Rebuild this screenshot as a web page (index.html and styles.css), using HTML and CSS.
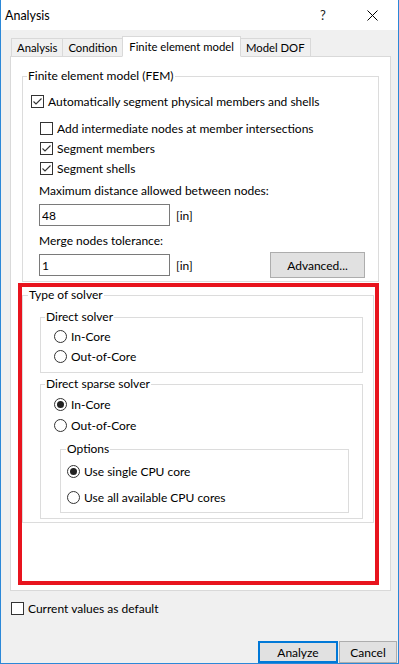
FILE: index.html
```html
<!DOCTYPE html>
<html>
<head>
<meta charset="utf-8">
<link rel="stylesheet" href="styles.css">
</head>
<body>
<div class="window">
  <div class="titlebar">
    <span class="title">Analysis</span>
    <span class="caption-btn help">?</span>
    <span class="caption-btn close">
      <svg width="11" height="11" viewBox="0 0 11 11"><path d="M0.5 0.5 L10.5 10.5 M10.5 0.5 L0.5 10.5" stroke="#000" stroke-width="1" fill="none"/></svg>
    </span>
  </div>
  <div class="content">
    <div class="tabs">
      <div class="tab">Analysis</div>
      <div class="tab">Condition</div>
      <div class="tab active">Finite element model</div>
      <div class="tab">Model DOF</div>
    </div>
    <div class="panel">
      <fieldset class="group fem">
        <legend>Finite element model (FEM)</legend>
        <div class="check auto">
          <span class="box"><svg width="11" height="11" viewBox="0 0 11 11"><path d="M1.5 5.5 L4 8 L9.5 2.5" stroke="#333" stroke-width="1.1" fill="none"/></svg></span>
          <span>Automatically segment physical members and shells</span>
        </div>
        <div class="check indent">
          <span class="box"></span>
          <span>Add intermediate nodes at member intersections</span>
        </div>
        <div class="check indent">
          <span class="box"><svg width="11" height="11" viewBox="0 0 11 11"><path d="M1.5 5.5 L4 8 L9.5 2.5" stroke="#333" stroke-width="1.1" fill="none"/></svg></span>
          <span>Segment members</span>
        </div>
        <div class="check indent">
          <span class="box"><svg width="11" height="11" viewBox="0 0 11 11"><path d="M1.5 5.5 L4 8 L9.5 2.5" stroke="#333" stroke-width="1.1" fill="none"/></svg></span>
          <span>Segment shells</span>
        </div>
        <div class="field-label first">Maximum distance allowed between nodes:</div>
        <div class="field-row">
          <input class="field" type="text" value="48">
          <span class="unit">[in]</span>
        </div>
        <div class="field-label second">Merge nodes tolerance:</div>
        <div class="field-row last">
          <input class="field" type="text" value="1">
          <span class="unit">[in]</span>
          <button class="btn advanced">Advanced...</button>
        </div>
      </fieldset>

      <div class="highlight">
        <fieldset class="group solver">
          <legend>Type of solver</legend>
          <fieldset class="group direct">
            <legend>Direct solver</legend>
            <div class="radio"><span class="circle"></span><span>In-Core</span></div>
            <div class="radio"><span class="circle"></span><span>Out-of-Core</span></div>
          </fieldset>
          <fieldset class="group sparse">
            <legend>Direct sparse solver</legend>
            <div class="radio"><span class="circle on"></span><span>In-Core</span></div>
            <div class="radio gap1"><span class="circle"></span><span>Out-of-Core</span></div>
            <fieldset class="group options">
              <legend>Options</legend>
              <div class="radio"><span class="circle on"></span><span>Use single CPU core</span></div>
              <div class="radio gap6"><span class="circle"></span><span>Use all available CPU cores</span></div>
            </fieldset>
          </fieldset>
        </fieldset>
      </div>
    </div>

    <div class="check default">
      <span class="box"></span>
      <span>Current values as default</span>
    </div>

    <div class="buttons">
      <button class="btn primary">Analyze</button>
      <button class="btn cancel">Cancel</button>
    </div>
  </div>
</div>
</body>
</html>
```

FILE: styles.css
```css
* { box-sizing: border-box; }

body {
  margin: 0;
  font-family: Lato, "Noto Sans", sans-serif;
  font-size: 12px;
  color: #000;
  background: #fff;
}

.window {
  width: 399px;
  height: 664px;
  border: 1px solid #2b88d8;
  border-top: none;
  background: #f0f0f0;
  display: flex;
  flex-direction: column;
}

.titlebar {
  height: 30px;
  flex: none;
  background: #fff;
  display: flex;
  align-items: center;
  padding-left: 4px;
}

.title {
  flex: 1;
  font-size: 12.5px;
}

.caption-btn {
  width: 46px;
  height: 30px;
  display: flex;
  align-items: center;
  justify-content: center;
  margin-right: 3px;
}

.help {
  font-size: 13px;
  color: #222;
}

.content {
  flex: 1;
  display: flex;
  flex-direction: column;
  padding: 6px 0 0 9px;
}

.tabs {
  display: flex;
  align-items: flex-end;
  height: 21px;
  margin-left: 1px;
  margin-bottom: -1px;
  position: relative;
  z-index: 1;
}

.tab {
  height: 19px;
  padding: 0 5px;
  border: 1px solid #d9d9d9;
  background: #f0f0f0;
  margin-left: -1px;
  font-size: 11.3px;
  display: flex;
  align-items: center;
}

.tab:first-child { margin-left: 0; }

.tab.active {
  height: 21px;
  padding: 0 6px;
  background: #fff;
  border-bottom-color: #fff;
  position: relative;
  z-index: 1;
}

.panel {
  width: 381px;
  height: 535px;
  flex: none;
  border: 1px solid #d9d9d9;
  background: #fff;
  padding: 11px 11px 0 11px;
}

.group {
  margin: 0;
  border: 1px solid #dcdcdc;
  min-width: 0;
  padding-left: 0;
  padding-right: 0;
}

.group > legend {
  padding: 0 1px;
  line-height: 16px;
  height: 16px;
}

.fem > legend { margin-left: 4px; }
.solver > legend { margin-left: 5px; }
.direct > legend { margin-left: 4px; }
.sparse > legend { margin-left: 4px; }
.options > legend { margin-left: 5px; }

.fem {
  padding-top: 7px;
  padding-bottom: 3px;
}

.check {
  display: flex;
  align-items: center;
  height: 20px;
  gap: 4px;
}

.check.auto { margin-bottom: 7px; margin-left: 8px; }
.check.indent { margin-left: 17px; }

.box {
  width: 13px;
  height: 13px;
  flex: none;
  border: 1px solid #333;
  background: #fff;
  display: flex;
}

.field-label {
  line-height: 16px;
  margin-left: 16px;
}

.field-label.first { margin-top: 5px; }
.field-label.second { margin-top: 7px; }

.field-row {
  display: flex;
  align-items: center;
  height: 22px;
  margin: 5px 8px 0 16px;
}

.field-row.last {
  height: 26px;
  margin-top: 3px;
}

.field {
  width: 131px;
  height: 22px;
  border: 1px solid #7a7a7a;
  padding: 0 2px;
  font: inherit;
  color: #000;
  background: #fff;
  outline: none;
}

.unit { margin-left: 6px; }

.btn {
  font: inherit;
  color: #000;
  background: #e1e1e1;
  border: 1px solid #adadad;
  padding: 0;
}

.advanced {
  width: 95px;
  height: 26px;
  margin-left: auto;
  margin-right: 5px;
}

.highlight {
  width: 353px;
  height: 294px;
  margin-top: 8px;
  outline: 4px solid #e8141e;
}

.solver {
  margin-top: -3px;
  margin-right: 1px;
  padding-top: 6px;
  padding-bottom: 3px;
}

.direct {
  margin: 0 10px 0 17px;
  padding-top: 1px;
  padding-bottom: 6px;
}

.sparse {
  margin: 3px 10px 0 17px;
  padding-top: 2px;
  padding-bottom: 5px;
}

.options {
  margin: 6px 13px 0 19px;
  padding-top: 4px;
  padding-bottom: 5px;
}

.radio {
  display: flex;
  align-items: center;
  height: 20px;
  gap: 4px;
}

.direct > .radio,
.sparse > .radio { margin-left: 13px; }
.options > .radio { margin-left: 6px; }

.radio.gap1 { margin-top: 1px; }
.radio.gap6 { margin-top: 6px; }

.circle {
  width: 13px;
  height: 13px;
  flex: none;
  border: 1px solid #333;
  border-radius: 50%;
  background: #fff;
  display: flex;
  align-items: center;
  justify-content: center;
}

.circle.on::after {
  content: "";
  width: 7px;
  height: 7px;
  border-radius: 50%;
  background: #222;
}

.check.default {
  margin-top: 7px;
  margin-left: 1px;
}

.buttons {
  margin-top: auto;
  display: flex;
  justify-content: flex-end;
  padding-right: 1px;
}

.btn.primary {
  width: 80px;
  height: 22px;
  border: 2px solid #0078d7;
}

.btn.cancel {
  width: 58px;
  height: 22px;
  margin-left: 1px;
}
```
